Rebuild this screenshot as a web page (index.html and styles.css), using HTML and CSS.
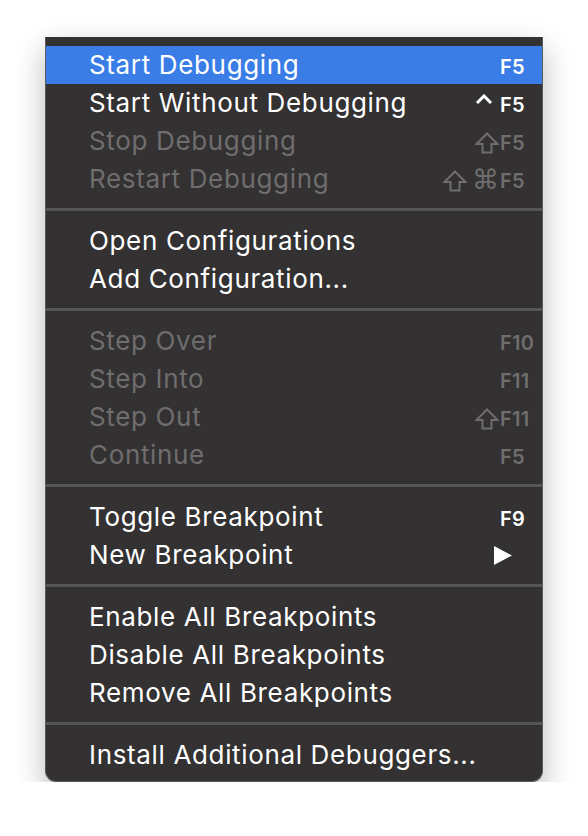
FILE: index.html
```html
<!DOCTYPE html>
<html lang="en">
<head>
  <meta charset="UTF-8" />
  <title>Debug Menu</title>
  <link rel="stylesheet" href="styles.css">
</head>
<body>

  <div class="menu">

    <!-- run -->
    <div class="item active">
      <span class="label">Start Debugging</span>
      <span class="mods"></span>
      <span class="key">F5</span>
    </div>
    <div class="item">
      <span class="label">Start Without Debugging</span>
      <span class="mods">
        <svg class="caret" width="18" height="10" viewBox="0 0 18 10"><path d="M2 9 L9 2 L16 9" fill="none" stroke="currentColor" stroke-width="3"/></svg>
      </span>
      <span class="key">F5</span>
    </div>
    <div class="item disabled">
      <span class="label">Stop Debugging</span>
      <span class="mods">
        <svg class="shift" width="24" height="22" viewBox="0 0 24 22"><path d="M12 1.5 L22.5 12 L16.5 12 L16.5 20.5 L7.5 20.5 L7.5 12 L1.5 12 Z" fill="none" stroke="currentColor" stroke-width="2" stroke-linejoin="miter"/></svg>
      </span>
      <span class="key">F5</span>
    </div>
    <div class="item disabled">
      <span class="label">Restart Debugging</span>
      <span class="mods">
        <svg class="shift" width="24" height="22" viewBox="0 0 24 22"><path d="M12 1.5 L22.5 12 L16.5 12 L16.5 20.5 L7.5 20.5 L7.5 12 L1.5 12 Z" fill="none" stroke="currentColor" stroke-width="2" stroke-linejoin="miter"/></svg>
        <span class="cmd">⌘</span>
      </span>
      <span class="key">F5</span>
    </div>

    <div class="sep"></div>

    <!-- configurations -->
    <div class="item">
      <span class="label">Open Configurations</span>
    </div>
    <div class="item">
      <span class="label">Add Configuration...</span>
    </div>

    <div class="sep"></div>

    <!-- stepping -->
    <div class="item disabled">
      <span class="label">Step Over</span>
      <span class="mods"></span>
      <span class="key">F10</span>
    </div>
    <div class="item disabled">
      <span class="label">Step Into</span>
      <span class="mods"></span>
      <span class="key">F11</span>
    </div>
    <div class="item disabled">
      <span class="label">Step Out</span>
      <span class="mods">
        <svg class="shift" width="24" height="22" viewBox="0 0 24 22"><path d="M12 1.5 L22.5 12 L16.5 12 L16.5 20.5 L7.5 20.5 L7.5 12 L1.5 12 Z" fill="none" stroke="currentColor" stroke-width="2" stroke-linejoin="miter"/></svg>
      </span>
      <span class="key">F11</span>
    </div>
    <div class="item disabled">
      <span class="label">Continue</span>
      <span class="mods"></span>
      <span class="key">F5</span>
    </div>

    <div class="sep"></div>

    <!-- breakpoints -->
    <div class="item">
      <span class="label">Toggle Breakpoint</span>
      <span class="mods"></span>
      <span class="key">F9</span>
    </div>
    <div class="item">
      <span class="label">New Breakpoint</span>
      <span class="mods">
        <svg class="arrow" width="18" height="19" viewBox="0 0 18 19"><path d="M0 0 L18 9.5 L0 19 Z" fill="currentColor"/></svg>
      </span>
      <span class="key"></span>
    </div>

    <div class="sep"></div>

    <div class="item">
      <span class="label">Enable All Breakpoints</span>
    </div>
    <div class="item">
      <span class="label">Disable All Breakpoints</span>
    </div>
    <div class="item">
      <span class="label">Remove All Breakpoints</span>
    </div>

    <div class="sep"></div>

    <div class="item">
      <span class="label">Install Additional Debuggers...</span>
    </div>

  </div>

</body>
</html>
```

FILE: styles.css
```css
body {
  margin: 0;
  padding: 0;
  background: #ffffff;
  font-family: Inter, "Noto Sans", sans-serif;
}

.menu {
  width: 496px;
  margin: 37px 0 0 45px;
  padding: 9px 0 7px;
  background: #333132;
  border: 1px solid #5c5b5c;
  border-top: none;
  border-radius: 0 0 11px 11px;
  box-shadow: 0 12px 30px rgba(0, 0, 0, 0.28);
}

.item {
  display: grid;
  grid-template-columns: 1fr auto 42px;
  align-items: baseline;
  height: 38px;
  line-height: 38px;
  padding-left: 43px;
  color: #ffffff;
}

.item.active {
  background: #3a7de6;
}

.item.disabled {
  color: #6f6d6e;
}

.label {
  font-size: 26px;
  letter-spacing: 0.65px;
  white-space: nowrap;
}

.mods {
  display: flex;
  align-items: center;
  gap: 5px;
  align-self: center;
  height: 38px;
  padding-right: 1px;
}

.key {
  font-size: 20px;
  font-weight: 600;
  letter-spacing: 0.3px;
}

.caret {
  margin-top: -10px;
  margin-right: 6px;
}

.shift {
  margin-top: 2px;
}

.cmd {
  font-family: "DejaVu Sans", sans-serif;
  font-size: 27px;
  line-height: 38px;
}

.arrow {
  margin-right: -13px;
}

.sep {
  height: 3px;
  margin: 10px 0 11px;
  background: #565556;
}
```
